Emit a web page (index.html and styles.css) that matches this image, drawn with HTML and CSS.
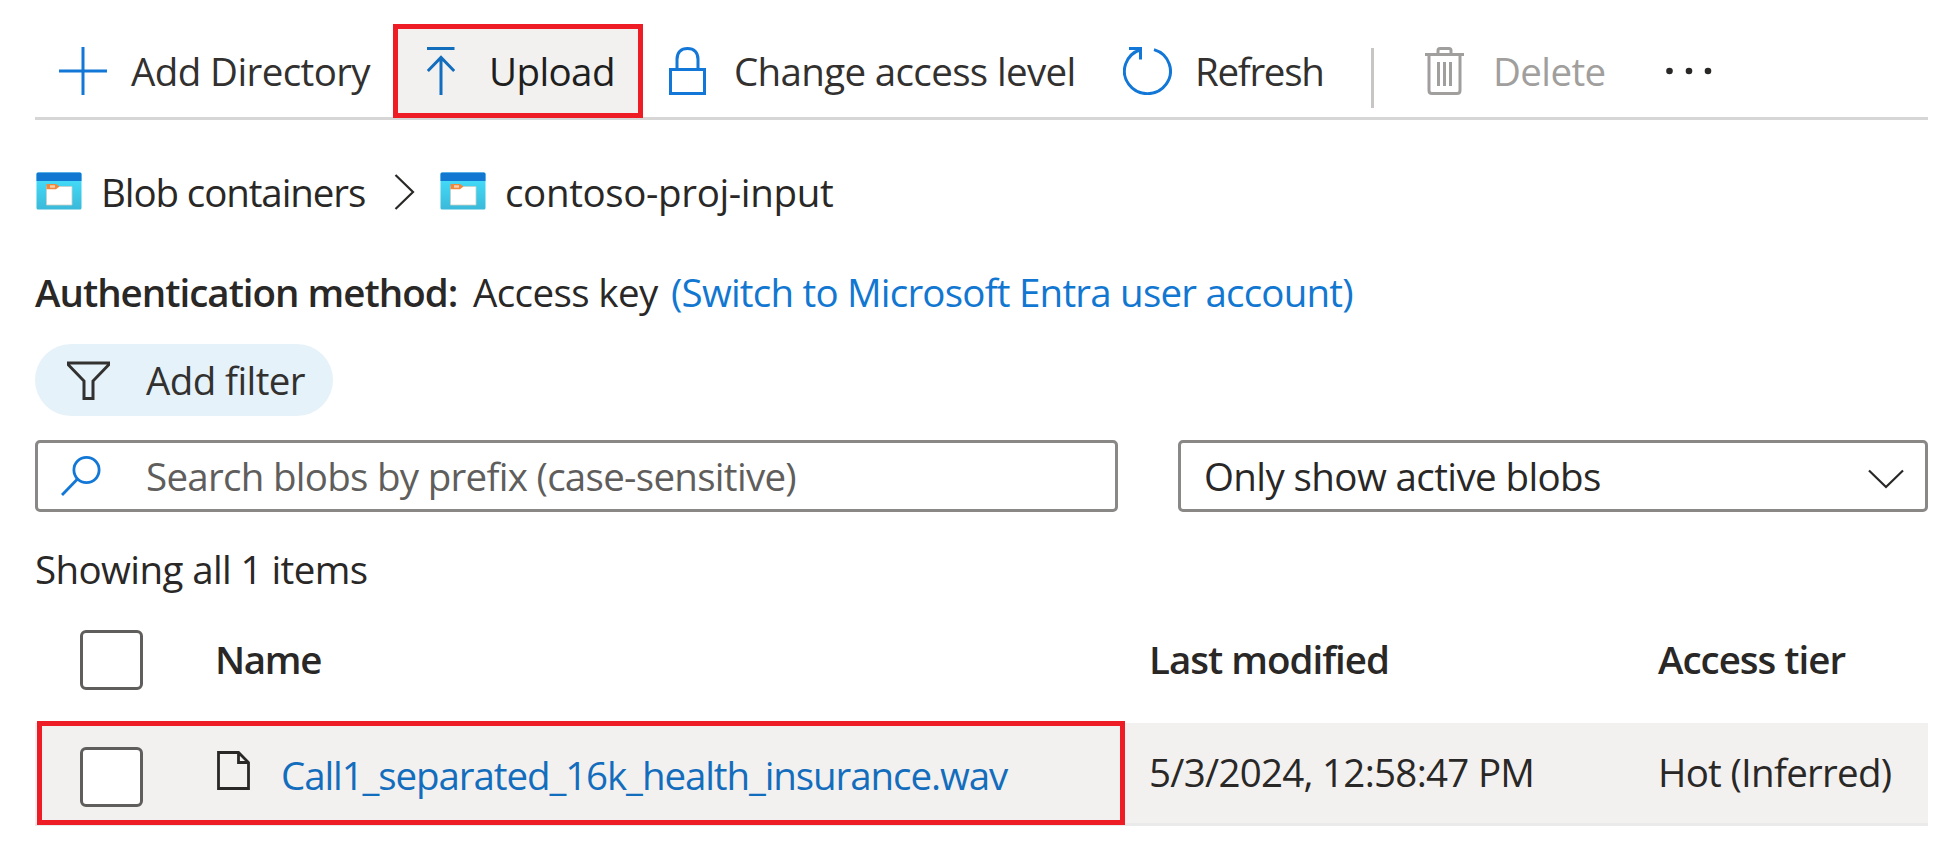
FILE: index.html
```html
<!DOCTYPE html>
<html lang="en">
<head>
<meta charset="utf-8">
<title>contoso-proj-input</title>
<link rel="stylesheet" href="styles.css">
</head>
<body>
<svg class="defs" width="0" height="0" aria-hidden="true">
  <defs>
    <linearGradient id="cyan" x1="0" y1="0" x2="0" y2="1"><stop offset="0.25" stop-color="#42d8f6"/><stop offset="1" stop-color="#3bb9d9"/></linearGradient>
    <symbol id="container" viewBox="0 0 46 38">
      <rect x="0.5" y="0.5" width="45" height="37" rx="1.5" fill="url(#cyan)"/>
      <path d="M0.5 9V2Q0.5 0.5 2 0.5H44Q45.500 .5 45.500 2V9Z" fill="#1277d1"/>
      <path d="M10.500 14.500H36V33H10.500Z" fill="#fff" stroke="#c9cfc8" stroke-width="0.8"/>
      <path d="M10.500 12H20L23.500 14.500L20 17.200H10.500Z" fill="#f0883c"/>
      <rect x="14" y="13.300" width="5" height="2.400" fill="#fbd0a8"/>
    </symbol>
  </defs>
</svg>
<main class="page">
  <nav class="toolbar">
    <button class="command add"><svg width="48" height="48" viewBox="0 0 48 48"><path d="M24 0V48M0 24H48" stroke-width="3"/></svg><span>Add Directory</span></button>
    <button class="command upload"><svg width="28" height="48" viewBox="0 0 28 48"><path d="M0 1.500H27.500M14 48V11M0.800 24L14 10.500L27.200 24" stroke-width="3"/></svg><span>Upload</span></button>
    <button class="command access"><svg width="37" height="48" viewBox="0 0 37 48"><path d="M1.500 22.500H35.500V46.500H1.500ZM8 22V12.500C8 5.500 12 1.500 18.500 1.500S29 5.500 29 12.500V22" stroke-width="3"/></svg><span>Change access level</span></button>
    <button class="command refresh"><svg width="49" height="48" viewBox="0 0 49 48"><path d="M31 2.600A23 22.500 0 1 1 17.500 2.700M6 1.500H17.500V12.500" stroke-width="3"/></svg><span>Refresh</span></button>
    <span class="separator"></span>
    <button class="command delete"><svg width="39" height="48" viewBox="0 0 39 48"><path d="M0 7.500H39M13 7V3.500Q13 1.500 15 1.500H24Q26 1.500 26 3.500V7M4 8V43.500Q4 46.500 7 46.500H32Q35 46.500 35 43.500V8M13.500 15V39M19.500 15V39M25.500 15V39" stroke-width="3"/></svg><span>Delete</span></button>
    <button class="command more"><svg width="46" height="8" viewBox="0 0 46 8"><circle cx="3.500" cy="4" r="3.300"/><circle cx="23" cy="4" r="3.300"/><circle cx="42" cy="4" r="3.300"/></svg></button>
  </nav>

  <div class="breadcrumb">
    <svg class="container-icon" width="46" height="38"><use href="#container"/></svg>
    <span class="crumb-root">Blob containers</span>
    <svg class="crumb-arrow" width="21" height="36" viewBox="0 0 21 36"><path d="M1.500 1L19 18L1.500 35"/></svg>
    <svg class="container-icon" width="46" height="38"><use href="#container"/></svg>
    <span class="crumb-current">contoso-proj-input</span>
  </div>

  <div class="auth"><b>Authentication method:</b><span class="auth-value">Access key</span><a class="switch">(Switch to Microsoft Entra user account)</a></div>

  <button class="filter"><svg width="43" height="39" viewBox="0 0 43 39"><path d="M1.500 2H41.500V4L26 20V37.500H17V20L1.500 4Z"/></svg><span>Add filter</span></button>

  <div class="inputs">
    <div class="search"><svg width="40" height="40" viewBox="0 0 40 40"><circle cx="25.500" cy="14" r="12.600"/><path d="M16.500 23L1 39"/></svg><span>Search blobs by prefix (case-sensitive)</span></div>
    <div class="select"><span>Only show active blobs</span><svg width="36" height="20" viewBox="0 0 36 20"><path d="M1 1.500L18 18L35 1.500"/></svg></div>
  </div>

  <p class="count">Showing all 1 items</p>

  <section class="table">
    <div class="row head">
      <span class="checkbox"></span>
      <span class="title name">Name</span>
      <span class="title">Last modified</span>
      <span class="title">Access tier</span>
    </div>
    <div class="row item">
      <span class="checkbox"></span>
      <span class="file"><svg width="33" height="39" viewBox="0 0 33 39"><path d="M1.500 1.500H21.500L31.500 11.500V37.500H1.500ZM21.500 1.500V11.500H31.500"/></svg><a>Call1_separated_16k_health_insurance.wav</a></span>
      <span class="value">5/3/2024, 12:58:47 PM</span>
      <span class="value">Hot (Inferred)</span>
      <span class="highlight"></span>
    </div>
  </section>
</main>
</body>
</html>
```
FILE: styles.css
```css
* { box-sizing: border-box; }
body { margin: 0; background: #fff; color: #292827; font: 38.5px/52px "Open Sans", "Noto Sans", sans-serif; letter-spacing: -0.6px; }
.defs { position: absolute; }
.page { width: 1949px; height: 849px; padding: 24px 21px 0 35px; overflow: hidden; }
svg { flex: none; display: block; fill: none; }
span, a, b { white-space: nowrap; }
button { font: inherit; letter-spacing: inherit; color: inherit; background: none; border: 0; padding: 0; margin: 0; }

.toolbar { display: grid; grid-template-columns: 358px 250px 455px 273px 3px 266px 1fr; height: 96px; border-bottom: 3px solid #d6d6d6; }
.command { display: flex; align-items: center; height: 94px; color: #323130; }
.command svg { stroke: #1277d6; }
.add { padding-left: 24px; gap: 24px; }
.upload { padding-left: 29px; gap: 34px; border: 5px solid #ee1c25; background: #f3f1f0; color: #201f1e; }
.upload svg { stroke: #136dbd; }
.access { padding-left: 26px; gap: 28px; letter-spacing: -0.65px; }
.refresh { padding-left: 25px; gap: 23px; letter-spacing: -1.3px; }
.separator { height: 60px; margin-top: 24px; background: #c8c6c4; }
.delete { padding-left: 51px; gap: 29px; color: #a19f9d; }
.delete svg { stroke: #a19f9d; }
.more { padding-left: 26px; }
.more svg { fill: #292827; stroke: none; }

.breadcrumb { display: flex; align-items: center; height: 52px; margin-top: 46px; }
.container-icon { margin: -3px 0 0 1px; }
.crumb-root { width: 312px; padding-left: 19px; letter-spacing: -1.1px; }
.crumb-arrow { stroke: #292827; stroke-width: 2.200; margin-right: 24px; }
.crumb-current { padding-left: 19px; letter-spacing: -0.36px; }

.auth { display: flex; height: 52px; margin-top: 48px; }
.auth b { width: 438px; font-weight: 600; letter-spacing: -1px; }
.auth-value { width: 198px; }
a { color: #1277d1; }
.switch { letter-spacing: -0.79px; }

.filter { display: flex; align-items: center; gap: 36px; width: 298px; height: 72px; margin-top: 26px; padding-left: 32px; border-radius: 36px; background: #e5f2fa; color: #323130; }
.filter svg { stroke: #323130; stroke-width: 3; }

.inputs { display: grid; grid-template-columns: 1083px 750px; gap: 60px; margin-top: 24px; }
.search, .select { display: flex; align-items: center; height: 72px; border: 3px solid #8a8886; border-radius: 5px; }
.search { padding-left: 23px; gap: 45px; color: #605e5c; letter-spacing: -0.71px; }
.search svg { stroke: #1277d6; stroke-width: 2.800; }
.select { justify-content: space-between; padding: 0 21px 1px 23px; }
.select svg { stroke: #292827; stroke-width: 2.200; margin-top: 7px; }

.count { height: 52px; margin: 31px 0 0; }

.table { margin-top: 31px; }
.row { display: grid; grid-template-columns: 180px 934px 509px 270px; align-items: center; }
.checkbox { width: 63px; height: 60px; margin-left: 45px; border: 3px solid #605e5c; border-radius: 6px; background: #fff; }
.head { height: 97px; padding-bottom: 29px; font-weight: 600; letter-spacing: -1px; }
.title { padding-bottom: 3px; }
.name { letter-spacing: -1.35px; }
.item { position: relative; height: 103px; background: #f3f1f0; border-bottom: 3px solid #eaeaea; }
.item .checkbox { margin-top: 8px; }
.file { display: flex; align-items: center; gap: 31px; padding: 3px 0 0 2px; letter-spacing: -1.1px; }
.file svg { stroke: #292827; stroke-width: 2.800; margin-top: -9px; }
.file a { color: #136dbd; }
.value { padding-bottom: 3px; letter-spacing: -0.72px; }
.highlight { position: absolute; left: 2px; top: -2px; width: 1088px; height: 104px; border: 5px solid #ee1c25; }
```
